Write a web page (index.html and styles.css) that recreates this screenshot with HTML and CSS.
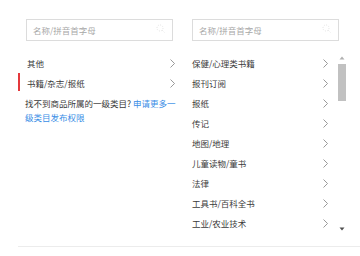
FILE: index.html
```html
<!DOCTYPE html>
<html lang="zh">
<head>
<meta charset="utf-8">
<link rel="stylesheet" href="styles.css">
</head>
<body>
<div class="page">
  <div class="cols">
    <div class="col col-left">
      <div class="search">
        <span class="ph">名称/拼音首字母</span>
        <svg class="sicon" width="10" height="10" viewBox="0 0 10 10"><circle cx="4" cy="4" r="3" fill="none" stroke="#e4e4e4" stroke-width="1" stroke-dasharray="1 1.3"/><line x1="6.3" y1="6.3" x2="9" y2="9" stroke="#e4e4e4" stroke-width="1" stroke-dasharray="1 1"/></svg>
      </div>
      <div class="list">
        <div class="item"><span>其他</span><svg class="chev" width="5" height="9" viewBox="0 0 5 9"><polyline points="0.5,0.5 4.5,4.5 0.5,8.5" fill="none" stroke="#808080" stroke-width="0.8"/></svg></div>
        <div class="item active"><span>书籍/杂志/报纸</span><svg class="chev" width="5" height="9" viewBox="0 0 5 9"><polyline points="0.5,0.5 4.5,4.5 0.5,8.5" fill="none" stroke="#808080" stroke-width="0.8"/></svg></div>
      </div>
      <p class="note">找不到商品所属的一级类目? <span class="link">申请更多一级类目发布权限</span></p>
    </div>
    <div class="col col-right">
      <div class="search">
        <span class="ph">名称/拼音首字母</span>
        <svg class="sicon" width="10" height="10" viewBox="0 0 10 10"><circle cx="4" cy="4" r="3" fill="none" stroke="#e4e4e4" stroke-width="1" stroke-dasharray="1 1.3"/><line x1="6.3" y1="6.3" x2="9" y2="9" stroke="#e4e4e4" stroke-width="1" stroke-dasharray="1 1"/></svg>
      </div>
      <div class="scrollwrap">
        <div class="sublist">
          <div class="item"><span>保健/心理类书籍</span><svg class="chev" width="5" height="9" viewBox="0 0 5 9"><polyline points="0.5,0.5 4.5,4.5 0.5,8.5" fill="none" stroke="#808080" stroke-width="0.8"/></svg></div>
          <div class="item"><span>报刊订阅</span><svg class="chev" width="5" height="9" viewBox="0 0 5 9"><polyline points="0.5,0.5 4.5,4.5 0.5,8.5" fill="none" stroke="#808080" stroke-width="0.8"/></svg></div>
          <div class="item"><span>报纸</span><svg class="chev" width="5" height="9" viewBox="0 0 5 9"><polyline points="0.5,0.5 4.5,4.5 0.5,8.5" fill="none" stroke="#808080" stroke-width="0.8"/></svg></div>
          <div class="item"><span>传记</span><svg class="chev" width="5" height="9" viewBox="0 0 5 9"><polyline points="0.5,0.5 4.5,4.5 0.5,8.5" fill="none" stroke="#808080" stroke-width="0.8"/></svg></div>
          <div class="item"><span>地图/地理</span><svg class="chev" width="5" height="9" viewBox="0 0 5 9"><polyline points="0.5,0.5 4.5,4.5 0.5,8.5" fill="none" stroke="#808080" stroke-width="0.8"/></svg></div>
          <div class="item"><span>儿童读物/童书</span><svg class="chev" width="5" height="9" viewBox="0 0 5 9"><polyline points="0.5,0.5 4.5,4.5 0.5,8.5" fill="none" stroke="#808080" stroke-width="0.8"/></svg></div>
          <div class="item"><span>法律</span><svg class="chev" width="5" height="9" viewBox="0 0 5 9"><polyline points="0.5,0.5 4.5,4.5 0.5,8.5" fill="none" stroke="#808080" stroke-width="0.8"/></svg></div>
          <div class="item"><span>工具书/百科全书</span><svg class="chev" width="5" height="9" viewBox="0 0 5 9"><polyline points="0.5,0.5 4.5,4.5 0.5,8.5" fill="none" stroke="#808080" stroke-width="0.8"/></svg></div>
          <div class="item"><span>工业/农业技术</span><svg class="chev" width="5" height="9" viewBox="0 0 5 9"><polyline points="0.5,0.5 4.5,4.5 0.5,8.5" fill="none" stroke="#808080" stroke-width="0.8"/></svg></div>
        </div>
        <div class="sbar">
          <div class="sbtn"><svg width="6" height="4" viewBox="0 0 6 4"><polygon points="0.5,3.5 3,0.5 5.5,3.5" fill="#b0b0b0"/></svg></div>
          <div class="strack"><div class="sthumb"></div></div>
          <div class="sbtn"><svg width="6" height="4" viewBox="0 0 6 4"><polygon points="0.5,0.5 5.5,0.5 3,3.5" fill="#505050"/></svg></div>
        </div>
      </div>
    </div>
  </div>
  <div class="footer"></div>
</div>
</body>
</html>
```
FILE: styles.css
```css
html, body {
  margin: 0;
  background: #fff;
}
body {
  font-family: "Noto Sans CJK SC", "Noto Sans", sans-serif;
  font-size: 8.5px;
  color: #3a3a3a;
}
.page {
  padding: 19px 0 0 18px;
}
.cols {
  display: flex;
  gap: 2px;
}
.col-left {
  width: 164px;
}
.col-right {
  width: 163px;
}
.search {
  margin-left: 8px;
  width: 147px;
  height: 22px;
  box-sizing: border-box;
  border: 1px solid #dcdcdc;
  display: flex;
  align-items: center;
  justify-content: space-between;
  padding: 0 6px 0 6px;
}
.ph {
  color: #a8a8a8;
}
.sicon {
  margin-top: -3px;
}
.list {
  margin-top: 12px;
}
.item {
  height: 20px;
  display: flex;
  align-items: center;
  justify-content: space-between;
  padding: 0 7px 0 9px;
  position: relative;
  white-space: nowrap;
}
.item.active::before {
  content: "";
  position: absolute;
  left: 0;
  top: 0;
  width: 2px;
  height: 18px;
  background: #e4393c;
}
.chev {
  flex: none;
}
.note {
  margin: 0;
  padding: 3px 6px 0 7px;
  line-height: 14px;
  word-break: break-all;
}
.link {
  color: #3a8ee6;
}
.scrollwrap {
  margin-top: 12px;
  height: 181px;
  display: flex;
}
.sublist {
  flex: 1;
}
.sublist .item {
  padding: 0 9px 0 8px;
}
.sbar {
  width: 10px;
  display: flex;
  flex-direction: column;
}
.sbtn {
  height: 10px;
  flex: none;
  display: flex;
  align-items: center;
  justify-content: center;
}
.sbtn svg {
  display: block;
}
.strack {
  flex: 1;
  padding: 1px 1px 0 1px;
}
.sthumb {
  height: 37px;
  background: #c1c1c1;
}
.footer {
  margin-top: 12px;
  border-top: 1px solid #ececec;
}
```
